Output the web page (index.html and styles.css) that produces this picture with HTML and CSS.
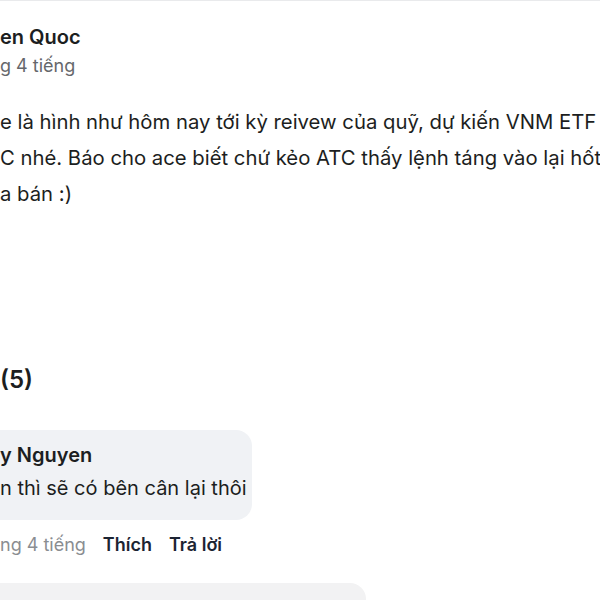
FILE: index.html
```html
<!DOCTYPE html>
<html lang="vi">
<head>
  <meta charset="UTF-8">
  <meta name="viewport" content="width=device-width, initial-scale=1.0">
  <title>Bài viết</title>
  <link rel="stylesheet" href="styles.css">
</head>
<body>
  <div class="post">
    <div class="author">en Quoc</div>
    <div class="meta">g 4 tiếng</div>
    <p class="content">
      e là hình như hôm nay tới kỳ reivew của quỹ, dự kiến VNM ETF<br>
      C nhé. Báo cho ace biết chứ kẻo ATC thấy lệnh táng vào lại hốt<br>
      a bán :)
    </p>
  </div>

  <div class="comments">
    <h2 class="comments-title">(5)</h2>

    <div class="comment">
      <div class="bubble">
        <div class="bubble-name">y Nguyen</div>
        <div class="bubble-text">n thì sẽ có bên cân lại thôi</div>
      </div>
      <div class="actions">
        <span class="time">ng 4 tiếng</span>
        <span class="action">Thích</span>
        <span class="action">Trả lời</span>
      </div>
    </div>

    <div class="comment">
      <div class="bubble bubble-wide">
        <div class="bubble-name">&nbsp;</div>
      </div>
    </div>
  </div>
</body>
</html>
```

FILE: styles.css
```css
body { margin: 0; font-family: Inter, "Noto Sans", sans-serif; color: #1c1e21; background: #fff; overflow: hidden; height: 600px; border-top: 1px solid #e9eaec; }

.post { padding-top: 22px; }
.author { font-size: 20px; font-weight: 600; line-height: 28px; }
.meta { font-size: 18px; color: #65676b; line-height: 24px; margin-top: 3px; }
.content { margin: 26px 0 0; font-size: 20.3px; line-height: 36px; white-space: nowrap; }

.comments { margin-top: 152px; }
.comments-title { margin: 0; font-size: 24px; font-weight: 600; line-height: 32px; }

.comment { margin-top: 34px; }
.comment + .comment { margin-top: 26px; }
.bubble { background: #f0f2f5; width: 252px; padding: 10px 0 14px; border-radius: 0 16px 16px 0; box-sizing: border-box; }
.bubble-wide { width: 366px; background: #f2f2f3; }
.bubble-name { font-size: 20px; font-weight: 600; line-height: 30px; }
.bubble-text { font-size: 20px; line-height: 36px; }

.actions { display: flex; gap: 17px; margin-top: 13px; font-size: 18px; line-height: 24px; }
.time { color: #8a8d91; }
.action { font-weight: 600; color: #1c2433; }
```
